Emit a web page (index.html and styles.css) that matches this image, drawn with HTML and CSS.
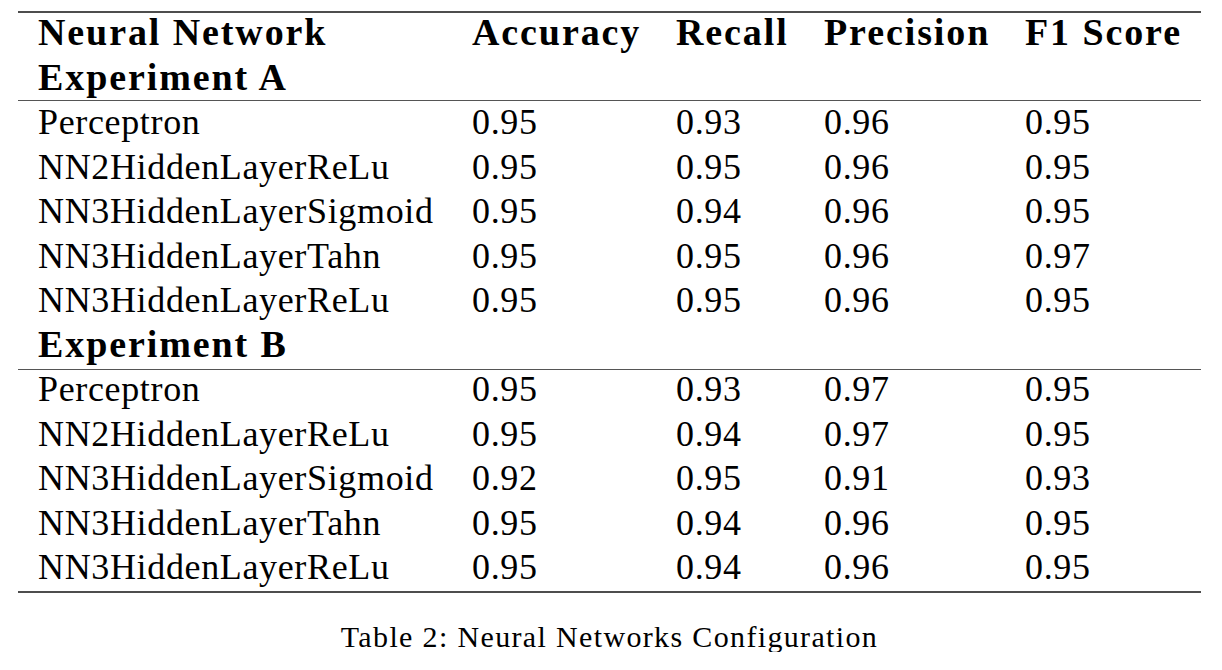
FILE: index.html
```html
<!DOCTYPE html>
<html lang="en">
<head>
<meta charset="utf-8">
<title>Neural Networks Configuration</title>
<link rel="stylesheet" href="styles.css">
</head>
<body>
<div class="page">
  <table class="results">
    <colgroup>
      <col class="c1"><col class="c2"><col class="c3"><col class="c4"><col class="c5">
    </colgroup>
    <thead>
      <tr class="head">
        <th>Neural Network</th><th>Accuracy</th><th>Recall</th><th>Precision</th><th>F1 Score</th>
      </tr>
    </thead>
    <tbody>
      <tr class="group group-a"><th>Experiment A</th><td></td><td></td><td></td><td></td></tr>
      <tr class="first first-a"><td>Perceptron</td><td>0.95</td><td>0.93</td><td>0.96</td><td>0.95</td></tr>
      <tr><td>NN2HiddenLayerReLu</td><td>0.95</td><td>0.95</td><td>0.96</td><td>0.95</td></tr>
      <tr><td>NN3HiddenLayerSigmoid</td><td>0.95</td><td>0.94</td><td>0.96</td><td>0.95</td></tr>
      <tr><td>NN3HiddenLayerTahn</td><td>0.95</td><td>0.95</td><td>0.96</td><td>0.97</td></tr>
      <tr><td>NN3HiddenLayerReLu</td><td>0.95</td><td>0.95</td><td>0.96</td><td>0.95</td></tr>
      <tr class="group group-b"><th>Experiment B</th><td></td><td></td><td></td><td></td></tr>
      <tr class="first first-b"><td>Perceptron</td><td>0.95</td><td>0.93</td><td>0.97</td><td>0.95</td></tr>
      <tr><td>NN2HiddenLayerReLu</td><td>0.95</td><td>0.94</td><td>0.97</td><td>0.95</td></tr>
      <tr><td>NN3HiddenLayerSigmoid</td><td>0.92</td><td>0.95</td><td>0.91</td><td>0.93</td></tr>
      <tr><td>NN3HiddenLayerTahn</td><td>0.95</td><td>0.94</td><td>0.96</td><td>0.95</td></tr>
      <tr class="last"><td>NN3HiddenLayerReLu</td><td>0.95</td><td>0.94</td><td>0.96</td><td>0.95</td></tr>
    </tbody>
  </table>
  <p class="caption">Table 2: Neural Networks Configuration</p>
</div>
</body>
</html>
```
FILE: styles.css
```css
html, body {
  margin: 0;
  padding: 0;
  background: #ffffff;
}

.page {
  padding: 11px 0 0 18px;
  font-family: "Liberation Serif", "Times New Roman", serif;
  color: #000;
}

.results {
  width: 1183px;
  table-layout: fixed;
  border-collapse: separate;
  border-spacing: 0;
  font-family: "Liberation Serif", "Times New Roman", serif;
}

.c1 { width: 434px; }
.c2 { width: 204px; }
.c3 { width: 148px; }
.c4 { width: 201px; }
.c5 { width: 196px; }

.results th,
.results td {
  box-sizing: border-box;
  padding: 0 0 6.4px 20px;
  text-align: left;
  white-space: nowrap;
  vertical-align: top;
  font-family: "Liberation Serif", "Times New Roman", serif;
  font-size: 36px;
  line-height: 38px;
  letter-spacing: 0.65px;
  font-weight: normal;
}

.results th {
  font-size: 38px;
  font-weight: bold;
  letter-spacing: 1.9px;
}

.head th {
  border-top: 2px solid #4d4d4d;
  padding-bottom: 7.2px;
}

.group-a th,
.group-a td {
  padding-bottom: 3.8px;
}

.group-b th,
.group-b td {
  padding-bottom: 6.15px;
}

.first td {
  border-top: 1px solid #555;
}

.first-a td {
  padding-top: 2.4px;
}

.first-b td {
  padding-top: 0;
}

.last td {
  border-bottom: 2px solid #4d4d4d;
  padding-bottom: 5.4px;
}

.caption {
  width: 1183px;
  margin: 29px 0 0 0;
  text-align: center;
  font-family: "Liberation Serif", "Times New Roman", serif;
  font-size: 30px;
  line-height: 30px;
  letter-spacing: 1.35px;
}
```
